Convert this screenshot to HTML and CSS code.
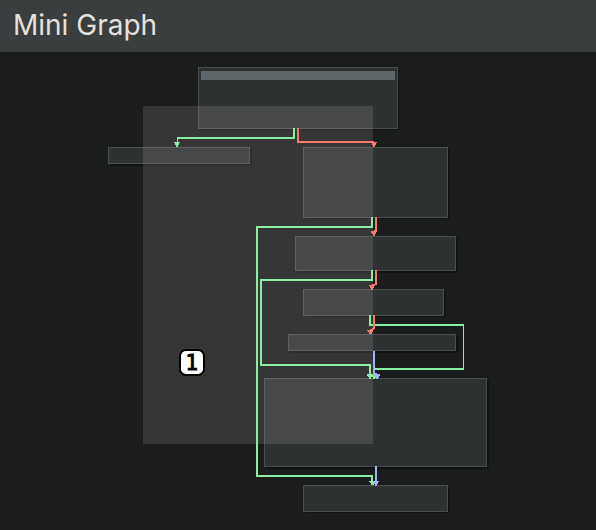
FILE: index.html
```html
<!DOCTYPE html>
<html lang="en">
<head>
<meta charset="utf-8">
<title>Mini Graph</title>
<link rel="stylesheet" href="styles.css">
</head>
<body>
<section class="panel">
  <header class="panel-header"><h1 class="panel-title">Mini Graph</h1></header>
  <svg class="graph" viewBox="0 52 596 478" role="img" aria-label="Mini Graph">
    <g class="shadows">
      <rect x="201" y="70" width="198" height="60"/>
      <rect x="111" y="149" width="141" height="17"/>
      <rect x="306" y="149" width="144" height="70"/>
      <rect x="298" y="238" width="160" height="35"/>
      <rect x="306" y="291" width="140" height="26"/>
      <rect x="290" y="336" width="168" height="17"/>
      <rect x="267" y="380" width="222" height="89"/>
      <rect x="306" y="488" width="144" height="25"/>
    </g>
    <g class="nodes">
      <rect x="198.500" y="67.500" width="199" height="61"/>
      <rect x="108.500" y="147.500" width="141" height="16"/>
      <rect x="303.500" y="147.500" width="144" height="70"/>
      <rect x="295.500" y="236.500" width="160" height="34"/>
      <rect x="303.500" y="289.500" width="140" height="26"/>
      <rect x="288.500" y="334.500" width="167" height="16"/>
      <rect x="264.500" y="378.500" width="222" height="88"/>
      <rect x="303.500" y="485.500" width="144" height="26"/>
    </g>
    <rect class="current-line" x="201" y="71" width="194" height="9"/>
    <rect class="viewport" x="143" y="106" width="230" height="338"/>
    <g class="edge edge-true">
      <path d="M294 128V138H177"/>
      <path class="thin" d="M177.500 138V143"/>
      <path d="M372 217V227H257V476H372V482"/>
      <path d="M372 270V280H261V365H370V376"/>
      <path d="M370 315V325H463"/>
      <path class="thin" d="M463.500 324V370"/>
      <path d="M463 369H374V376"/>
    </g>
    <g class="edge edge-false">
      <path d="M298 128V142H374"/>
      <path d="M376 217V232"/>
      <path d="M376 270V285"/>
      <path d="M374 315V329"/>
    </g>
    <g class="edge edge-jump">
      <path d="M374 351V374"/>
      <path d="M376 466V486"/>
    </g>
    <g class="heads">
      <path class="head-true" d="M174 142h6v1h-1v2h-1v2h-2v-2h-1v-2h-1z"/>
      <path class="head-false" d="M371 142h6v1h-1v2h-1v2h-2v-2h-1v-2h-1z"/>
      <path class="head-false" d="M371 231h3v-1h3v2h-1v2h-1v2h-2v-2h-1v-1h-1z"/>
      <path class="head-false" d="M369 285h3v-1h5v1h-2v1h-1v2h-1v2h-2v-2h-1v-2h-1z"/>
      <path class="head-false" d="M367 330h3v-1h2v-1h3v1h-1v1h-1v2h-1v2h-3v-2h-1v-1h-1z"/>
      <path class="head-true" d="M367 374h9v4h-1v1h-2v-2h-2v2h-2v-2h-1v-1h-1z"/>
      <path class="head-jump" d="M373 373h4v1h3v2h-1v2h-1v1h-2v-2h-1v-1h-2z"/>
      <path class="head-true" d="M369 481h6v1h-1v3h-3v-2h-1v-1h-1z"/>
      <path class="head-jump" d="M373 481h6v1h-1v2h-1v2h-2v-2h-1v-2h-1z"/>
    </g>
    <rect class="badge" x="180" y="350" width="24" height="25" rx="6"/>
    <text class="badge-label" x="192" y="370">1</text>
  </svg>
</section>
</body>
</html>
```

FILE: styles.css
```css
body {
  margin: 0;
  background: #1b1d1c;
  font-family: Inter, "Liberation Sans", sans-serif;
}

.panel {
  display: flex;
  flex-direction: column;
  min-height: 100vh;
}

.panel-header {
  background: #3a3e3f;
  padding: 7px 13px 9px;
}

.panel-title {
  margin: 0;
  color: #e6e1dc;
  font-size: 28px;
  line-height: 36px;
  font-weight: 400;
}

.graph {
  display: block;
  width: 100%;
}

.shadows {
  fill: #111312;
}

.nodes {
  fill: #2e3233;
  stroke: #4b4e4e;
}

.current-line {
  fill: #5f6669;
}

.edge {
  fill: none;
  stroke-width: 2;
}

.thin {
  stroke-width: 1;
}

.edge-true {
  stroke: #8aeea4;
}

.edge-false {
  stroke: #f67c70;
}

.edge-jump {
  stroke: #a0b4f4;
}

.head-true {
  fill: #8aeea4;
}

.head-false {
  fill: #f67c70;
}

.head-jump {
  fill: #a0b4f4;
}

.viewport {
  fill: #fff0f4;
  fill-opacity: 0.12;
}

.badge {
  fill: #fff;
  stroke: #000;
  stroke-width: 2;
}

.badge-label {
  fill: #000;
  stroke: #000;
  stroke-width: 1;
  font-family: "DejaVu Sans Condensed", "DejaVu Sans", sans-serif;
  font-size: 22px;
  text-anchor: middle;
}
```
